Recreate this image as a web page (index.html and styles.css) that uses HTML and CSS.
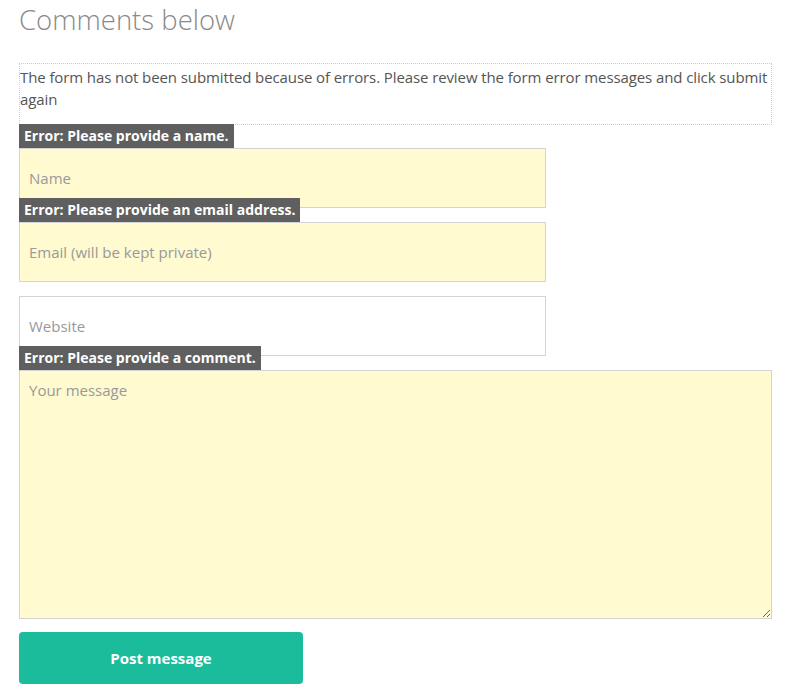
FILE: index.html
```html
<!DOCTYPE html>
<html>
<head>
<meta charset="utf-8">
<link rel="stylesheet" href="styles.css">
</head>
<body>
<div class="page">
  <h2 class="title">Comments below</h2>
  <div class="notice">The form has not been submitted because of errors. Please review the form error messages and click submit again</div>
  <form class="form">
    <div class="field">
      <span class="error">Error: Please provide a name.</span>
      <input class="input invalid" type="text" placeholder="Name">
    </div>
    <div class="field">
      <span class="error">Error: Please provide an email address.</span>
      <input class="input invalid" type="text" placeholder="Email (will be kept private)">
    </div>
    <div class="field">
      <input class="input" type="text" placeholder="Website">
    </div>
    <div class="field">
      <span class="error">Error: Please provide a comment.</span>
      <textarea class="textarea invalid" placeholder="Your message"></textarea>
    </div>
    <button class="submit" type="button">Post message</button>
  </form>
</div>
</body>
</html>
```
FILE: styles.css
```css
html, body {
  margin: 0;
  padding: 0;
  background: #fff;
}
body {
  font-family: "Open Sans", "Liberation Sans", sans-serif;
  color: #555;
}
.page {
  padding: 0 40px 0 19px;
}
.title {
  margin: 0;
  padding-top: 2px;
  font-weight: 300;
  font-size: 27.5px;
  line-height: 36px;
  color: #8a8a8a;
}
.notice {
  margin-top: 25px;
  border: 1px dotted #ccc;
  padding: 2px 0 14px 0;
  font-size: 15px;
  line-height: 22px;
  letter-spacing: -0.1px;
  color: #555;
}
.form {
  display: flex;
  flex-direction: column;
  padding-top: 23px;
}
.field {
  position: relative;
  margin-bottom: 14px;
  display: flex;
}
.error {
  position: absolute;
  left: 0;
  bottom: 100%;
  background: #5f5f5f;
  color: #fff;
  font-weight: 700;
  font-size: 14px;
  line-height: 24px;
  padding: 0 5px;
  white-space: nowrap;
}
.input, .textarea {
  box-sizing: border-box;
  border: 1px solid #d4d4d4;
  background: #fff;
  font-family: "Open Sans", "Liberation Sans", sans-serif;
  font-size: 15px;
  color: #555;
  padding: 0 9px;
  margin: 0;
  outline: none;
  border-radius: 0;
}
.input {
  width: 527px;
  height: 60px;
}
.textarea {
  width: 754px;
  height: 249px;
  padding-top: 9px;
  resize: both;
}
.invalid {
  background: #fffad0;
}
::placeholder {
  color: #999;
  opacity: 1;
}
.submit {
  width: 284px;
  height: 52px;
  margin: -1px 0 0 0;
  border: none;
  border-radius: 4px;
  background: #1abc9c;
  color: #fff;
  font-family: "Open Sans", "Liberation Sans", sans-serif;
  font-weight: 700;
  font-size: 15px;
  cursor: pointer;
}
```
